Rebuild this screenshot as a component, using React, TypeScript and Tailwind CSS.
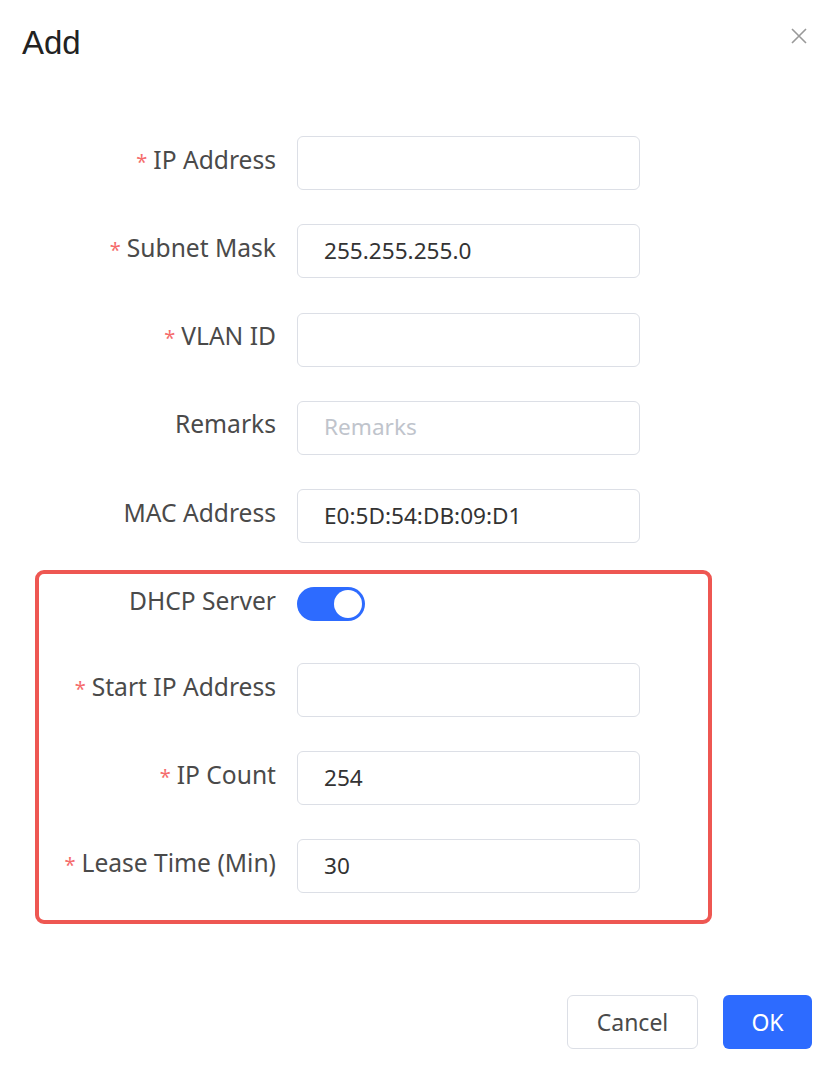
import React from 'react'

const FONT = { fontFamily: '"Noto Sans", "Open Sans", sans-serif' }

type Field = {
  label: string
  required?: boolean
  value?: string
  placeholder?: string
}

const TOP_FIELDS: Field[] = [
  { label: 'IP Address', required: true },
  { label: 'Subnet Mask', required: true, value: '255.255.255.0' },
  { label: 'VLAN ID', required: true },
  { label: 'Remarks', placeholder: 'Remarks' },
  { label: 'MAC Address', value: 'E0:5D:54:DB:09:D1' },
]

const DHCP_FIELDS: Field[] = [
  { label: 'Start IP Address', required: true },
  { label: 'IP Count', required: true, value: '254' },
  { label: 'Lease Time (Min)', required: true, value: '30' },
]

function Label({ field, width }: { field: Field; width: string }) {
  return (
    <div className={`${width} mb-[6px] shrink-0 text-right text-[24.6px] leading-none text-[#4a4a4a]`}>
      {field.required && <span className="mr-[6px] text-[20px] text-[#f56c6c]">*</span>}
      {field.label}
    </div>
  )
}

function Row({ field, width }: { field: Field; width: string }) {
  return (
    <div className="flex items-center">
      <Label field={field} width={width} />
      <div className="ml-[21px] flex h-[54px] w-[343px] items-center rounded-[6px] border border-[#dcdfe6] bg-white px-[26px] text-[22.6px] leading-none">
        {field.value ? (
          <span className="text-[#333]">{field.value}</span>
        ) : (
          <span className="text-[#c0c4cc]">{field.placeholder}</span>
        )}
      </div>
    </div>
  )
}

export default function App() {
  return (
    <div className="relative h-[1070px] w-[828px] bg-white" style={FONT}>
      {/* Header */}
      <div className="flex items-start justify-between pl-[22px] pr-[20px] pt-[26px]">
        <h1
          className="text-[33px] leading-none text-[#222]"
          style={{ fontFamily: '"Liberation Sans", Arial, sans-serif' }}
        >
          Add
        </h1>
        <svg width="18" height="18" viewBox="0 0 18 18" className="mt-[1px]">
          <path d="M2 2 L16 16 M16 2 L2 16" stroke="#999" strokeWidth="1.6" />
        </svg>
      </div>

      {/* Form */}
      <div className="mt-[77px] flex flex-col gap-[34.25px]">
        {TOP_FIELDS.map(f => (
          <Row key={f.label} field={f} width="w-[276px]" />
        ))}
      </div>

      {/* DHCP block */}
      <div className="ml-[35px] mt-[27px] w-[677px] rounded-[9px] border-4 border-[#ee5752] pb-[27px] pt-[13px]">
        <div className="flex items-center">
          <Label field={{ label: 'DHCP Server' }} width="w-[237px]" />
          <div className="ml-[21px] flex h-[34px] w-[68px] items-center justify-end rounded-full bg-[#2d6bff] pr-[3px]">
            <div className="h-[28px] w-[28px] rounded-full bg-white" />
          </div>
        </div>
        <div className="mt-[42px] flex flex-col gap-[34px]">
          {DHCP_FIELDS.map(f => (
            <Row key={f.label} field={f} width="w-[237px]" />
          ))}
        </div>
      </div>

      {/* Footer */}
      <div className="mt-[71px] flex justify-end gap-[25px] pr-[16px]">
        <button className="h-[54px] w-[131px] rounded-[6px] border border-[#dcdfe6] bg-white text-[23px] text-[#4a4a4a]">
          Cancel
        </button>
        <button className="h-[54px] w-[89px] rounded-[6px] bg-[#2d6bff] text-[23px] text-white">
          OK
        </button>
      </div>
    </div>
  )
}
